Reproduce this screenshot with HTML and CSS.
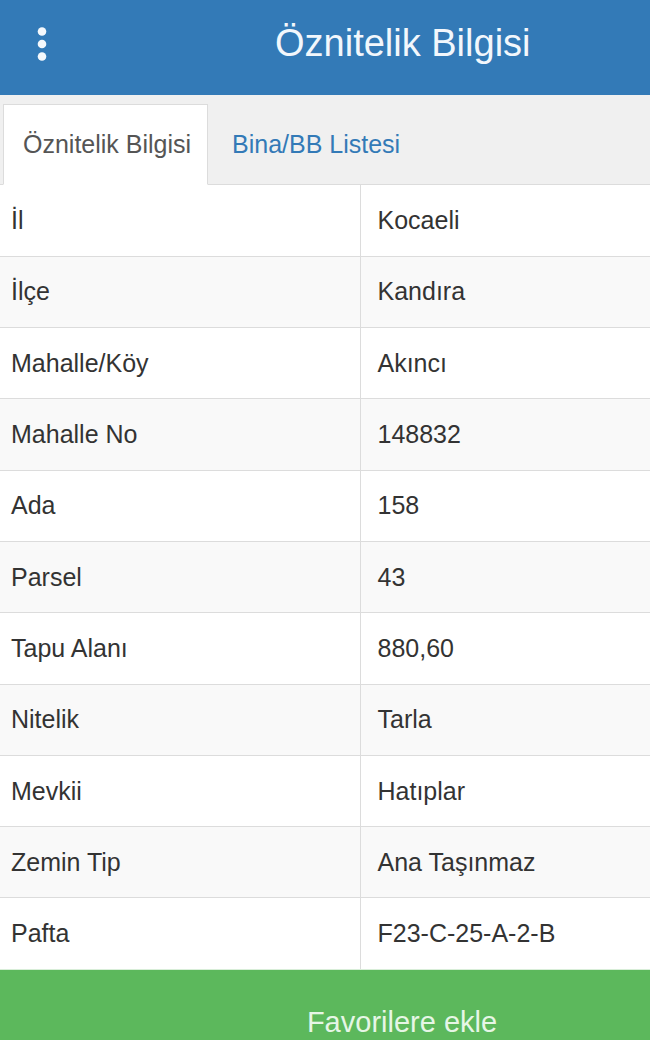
FILE: index.html
```html
<!DOCTYPE html>
<html lang="tr">
<head>
<meta charset="utf-8">
<title>Öznitelik Bilgisi</title>
<link rel="stylesheet" href="styles.css">
</head>
<body>
<header class="topbar">
  <div class="menu">
    <svg width="12" height="34" viewBox="0 0 12 34"><circle cx="6" cy="4.5" r="4.3" fill="#f4f8fc"/><circle cx="6" cy="17" r="4.3" fill="#f4f8fc"/><circle cx="6" cy="29.5" r="4.3" fill="#f4f8fc"/></svg>
  </div>
  <h1 class="title">Öznitelik Bilgisi</h1>
</header>
<nav class="tabs">
  <div class="tab active">Öznitelik Bilgisi</div>
  <div class="tab link">Bina/BB Listesi</div>
</nav>
<table class="attrs">
  <tbody>
    <tr><td class="k">İl</td><td class="v">Kocaeli</td></tr>
    <tr><td class="k">İlçe</td><td class="v">Kandıra</td></tr>
    <tr><td class="k">Mahalle/Köy</td><td class="v">Akıncı</td></tr>
    <tr><td class="k">Mahalle No</td><td class="v">148832</td></tr>
    <tr><td class="k">Ada</td><td class="v">158</td></tr>
    <tr><td class="k">Parsel</td><td class="v">43</td></tr>
    <tr><td class="k">Tapu Alanı</td><td class="v">880,60</td></tr>
    <tr><td class="k">Nitelik</td><td class="v">Tarla</td></tr>
    <tr><td class="k">Mevkii</td><td class="v">Hatıplar</td></tr>
    <tr><td class="k">Zemin Tip</td><td class="v">Ana Taşınmaz</td></tr>
    <tr><td class="k">Pafta</td><td class="v">F23-C-25-A-2-B</td></tr>
  </tbody>
</table>
<button class="fav">Favorilere ekle</button>
</body>
</html>
```
FILE: styles.css
```css
* { box-sizing: border-box; }
html, body { margin: 0; padding: 0; }
body {
  width: 650px;
  font-family: "Liberation Sans", Arial, sans-serif;
  color: #333;
  background: #fff;
  overflow: hidden;
}
.topbar {
  height: 95px;
  background: #337ab7;
  display: flex;
  align-items: center;
}
.menu {
  width: 275px;
  padding-left: 36px;
  display: flex;
  align-items: center;
  margin-top: -8px;
}
.menu svg { display: block; }
.title {
  margin: 0;
  font-weight: normal;
  font-size: 38px;
  line-height: 1.15;
  color: #f2f7fc;
  margin-top: -7px;
}
.tabs {
  height: 90px;
  background: #f0f0f0;
  display: flex;
  align-items: flex-end;
  padding-left: 3px;
  border-bottom: 1px solid #dcdcdc;
}
.tab {
  height: 81px;
  display: flex;
  align-items: center;
  font-size: 25px;
  margin-bottom: -1px;
}
.tab.active {
  width: 205px;
  padding-left: 19px;
  background: #fff;
  border: 1px solid #dcdcdc;
  border-bottom-color: #fff;
  color: #555;
}
.tab.link {
  padding-left: 24px;
  color: #337ab7;
}
.attrs {
  width: 650px;
  border-collapse: collapse;
  table-layout: fixed;
}
.attrs tr { height: 71.3px; }
.attrs tr:nth-child(even) { background: #f9f9f9; }
.attrs td {
  border-top: 1px solid #dcdcdc;
  font-size: 25px;
  color: #333;
  vertical-align: middle;
  padding: 0;
}
.attrs tr:first-child td { border-top: none; }
.attrs td.k { width: 360px; padding-left: 11px; border-right: 1px solid #dcdcdc; }
.attrs td.v { padding-left: 17px; }
.fav {
  display: block;
  width: 650px;
  height: 110px;
  border: none;
  border-top: 1px solid #d8eed8;
  background: #5cb85c;
  color: #e6f6e6;
  font-family: "Liberation Sans", Arial, sans-serif;
  font-size: 29px;
  line-height: 32px;
  padding: 36px 0 42px 154px;
  text-align: center;
}
```
